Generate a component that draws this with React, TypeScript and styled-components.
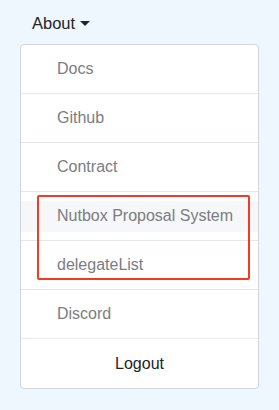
import React from "react";
import styled, { createGlobalStyle } from "styled-components";

const Global = createGlobalStyle`
  html, body { margin: 0; padding: 0; background: #eef6fe; }
  body { font-family: "Liberation Sans", Arial, sans-serif; }
`;

const Page = styled.div`
  width: 279px;
  height: 410px;
  box-sizing: border-box;
  padding: 11px 20px 0 20px;
  display: flex;
  flex-direction: column;
`;

const Toggle = styled.div`
  display: flex;
  align-items: center;
  gap: 5px;
  padding-left: 12px;
  height: 24px;
  font-size: 16.5px;
  color: #212529;
  margin-bottom: 9px;
`;

const Caret = styled.span`
  width: 0;
  height: 0;
  border-left: 5px solid transparent;
  border-right: 5px solid transparent;
  border-top: 5px solid #212529;
  margin-top: 1px;
`;

const Menu = styled.div`
  width: 239px;
  box-sizing: border-box;
  background: #fff;
  border: 1px solid #cfd6de;
  border-radius: 4px;
  display: flex;
  flex-direction: column;
  position: relative;
`;

const Item = styled.div<{ $center?: boolean; $last?: boolean }>`
  height: 49px;
  box-sizing: border-box;
  display: flex;
  align-items: center;
  justify-content: ${(p) => (p.$center ? "center" : "flex-start")};
  padding-left: ${(p) => (p.$center ? "0" : "36px")};
  border-bottom: ${(p) => (p.$last ? "none" : "1px solid #e5e8ec")};
  font-size: 16px;
  color: ${(p) => (p.$center ? "#212529" : "#7a7d82")};
  position: relative;
`;

const HoverBand = styled.div`
  position: absolute;
  left: 0;
  right: 0;
  top: 9px;
  height: 31px;
  background: #f6f7f9;
`;

const Label = styled.span`
  position: relative;
`;

const Highlight = styled.div`
  position: absolute;
  left: 16px;
  top: 150px;
  width: 213px;
  height: 85px;
  box-sizing: border-box;
  border: 2.5px solid #f43a22;
  border-radius: 2px;
  pointer-events: none;
`;

const items = ["Docs", "Github", "Contract", "Nutbox Proposal System", "delegateList", "Discord"];

export default function App() {
  return (
    <>
      <Global />
      <Page>
        <Toggle>
          About <Caret />
        </Toggle>
        <Menu>
          {items.map((t) => (
            <Item key={t}>
              {t === "Nutbox Proposal System" && <HoverBand />}
              <Label>{t}</Label>
            </Item>
          ))}
          <Item $center $last>Logout</Item>
          <Highlight />
        </Menu>
      </Page>
    </>
  );
}
